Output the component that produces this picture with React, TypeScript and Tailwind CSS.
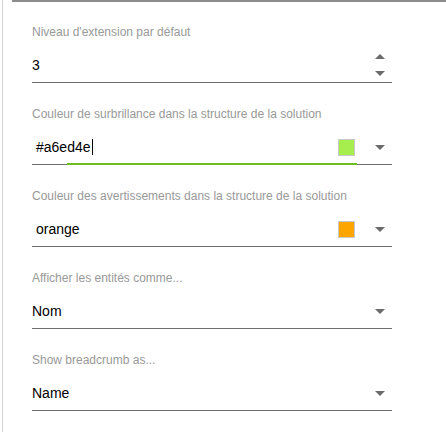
import React from 'react';

type FieldProps = {
  label: string;
  children: React.ReactNode;
  focused?: boolean;
};

function Field({ label, children, focused }: FieldProps) {
  return (
    <div className="w-[360px]">
      <div className="h-4 text-[12px] leading-4 text-[#999999]">{label}</div>
      <div className="relative mt-[7px] flex h-[36px] items-center border-b border-[#6f6f6f] pt-px">
        {children}
        {focused && <div className="absolute -bottom-px left-[35px] h-[2px] w-[290px] bg-[#6cbf1e]" />}
      </div>
    </div>
  );
}

function Caret() {
  return (
    <svg width="10" height="5" viewBox="0 0 10 5" className="shrink-0">
      <path d="M0 0 L10 0 L5 5 Z" fill="#6b6b6b" />
    </svg>
  );
}

function Swatch({ color }: { color: string }) {
  return <div className="h-[17px] w-[17px] border border-[#c8c8c8]" style={{ backgroundColor: color }} />;
}

export default function App() {
  return (
    <div className="relative h-[432px] w-[446px] overflow-hidden bg-white font-['Liberation_Sans',Arial,sans-serif]">
      <div className="absolute left-[2px] top-0 h-full w-px bg-[#d6d6d6]" />
      <div className="ml-3 h-[2px] bg-[#8c8c8c]" />
      <div className="flex flex-col gap-[23px] pl-8 pt-[22px]">
        <Field label="Niveau d'extension par défaut">
          <span className="flex-1 text-[14px] text-black">3</span>
          <div className="mr-[7px] flex flex-col gap-[12px]">
            <svg width="10" height="5" viewBox="0 0 10 5">
              <path d="M0 5 L10 5 L5 0 Z" fill="#6b6b6b" />
            </svg>
            <Caret />
          </div>
        </Field>
        <Field label="Couleur de surbrillance dans la structure de la solution" focused>
          <span className="flex-1 pl-1 text-[14px] text-black">
            #a6ed4e<span className="ml-px inline-block h-[16px] w-px translate-y-[3px] bg-black" />
          </span>
          <Swatch color="#a6ed4e" />
          <div className="ml-5 mr-[7px]">
            <Caret />
          </div>
        </Field>
        <Field label="Couleur des avertissements dans la structure de la solution">
          <span className="flex-1 pl-1 text-[14px] text-black">orange</span>
          <Swatch color="orange" />
          <div className="ml-5 mr-[7px]">
            <Caret />
          </div>
        </Field>
        <Field label="Afficher les entités comme...">
          <span className="flex-1 text-[14px] text-black">Nom</span>
          <div className="mr-[7px]">
            <Caret />
          </div>
        </Field>
        <Field label="Show breadcrumb as...">
          <span className="flex-1 text-[14px] text-black">Name</span>
          <div className="mr-[7px]">
            <Caret />
          </div>
        </Field>
      </div>
    </div>
  );
}
